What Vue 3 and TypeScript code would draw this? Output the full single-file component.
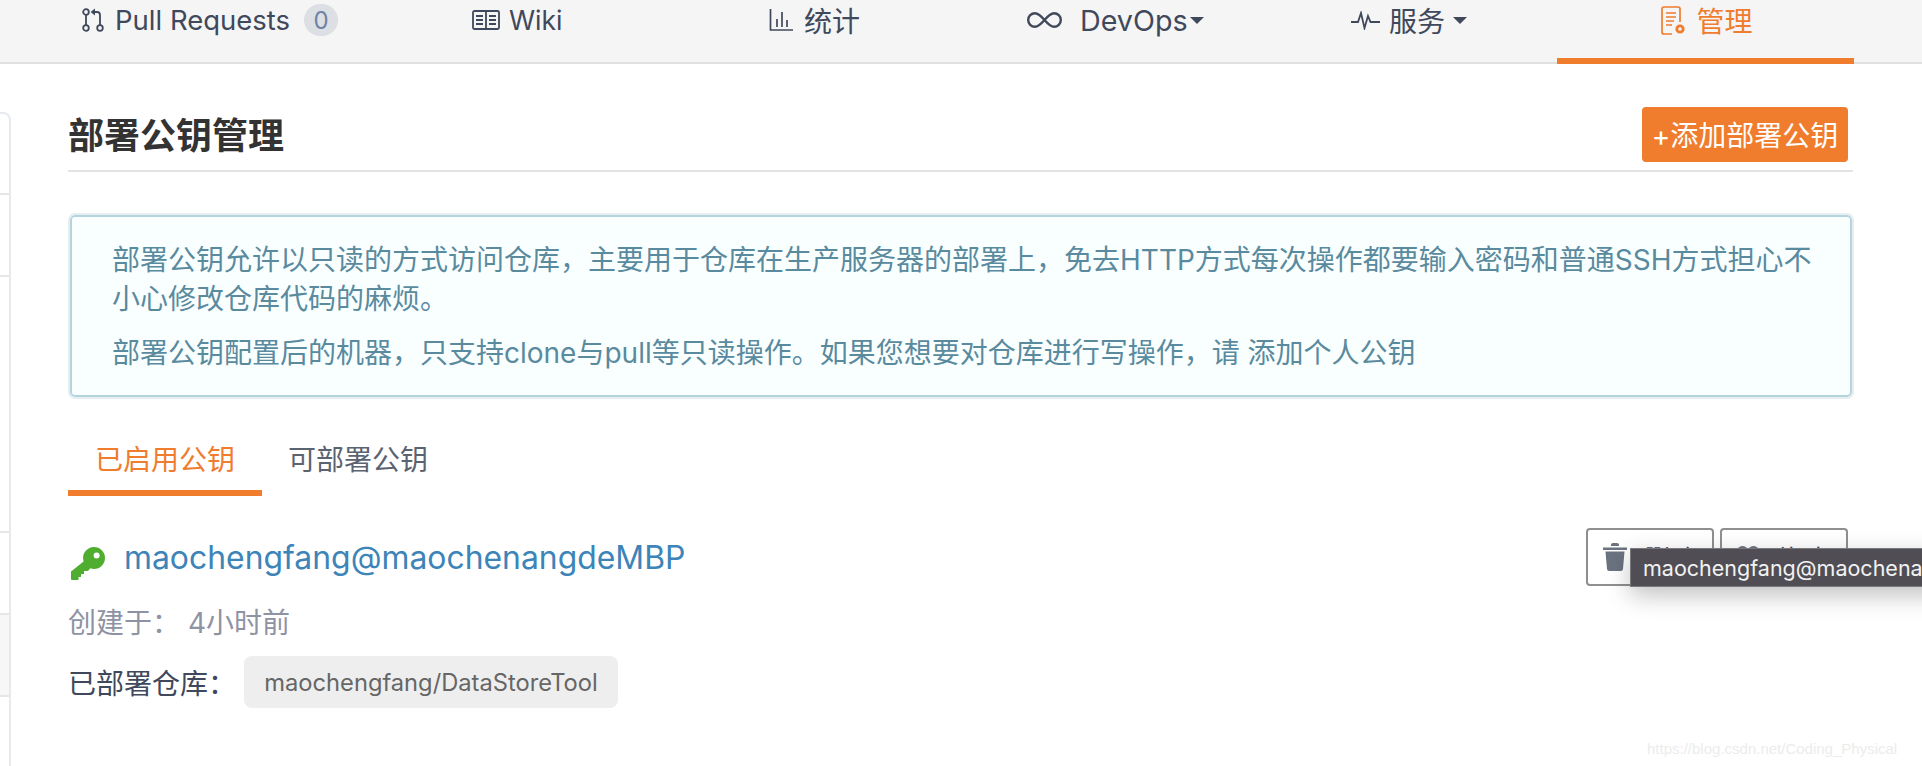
<script setup lang="ts">
interface NavItem { label: string; col: string; caret?: boolean; active?: boolean; count?: number; icon: string }
const navItems: NavItem[] = [
  { label: 'Pull Requests', col: 'c-pr', count: 0, icon: 'pr' },
  { label: 'Wiki', col: 'c-wiki', icon: 'wiki' },
  { label: '统计', col: 'c-stat', icon: 'stat' },
  { label: 'DevOps', col: 'c-devops', caret: true, icon: 'inf' },
  { label: '服务', col: 'c-serv', caret: true, icon: 'pulse' },
  { label: '管理', col: 'c-admin', active: true, icon: 'admin' },
]
const sideRows = [81, 82, 256, 82, 82, 82]
</script>

<template>
  <div class="page">
    <nav class="nav">
      <a v-for="item in navItems" :key="item.label" class="nav-item" :class="[item.col, { active: item.active }]">
        <svg v-if="item.icon === 'pr'" class="ico" width="22" height="24" viewBox="0 0 22 24" fill="none" stroke="currentColor" stroke-width="1.8">
          <circle cx="4" cy="4" r="2.800" /><circle cx="4" cy="20" r="2.800" /><circle cx="18" cy="20" r="2.800" />
          <path d="M4 7v10M18 17V7q0-3-3-3h-3" />
          <path d="M13 .5 8.500 4 13 7.500Z" fill="currentColor" stroke="none" />
        </svg>
        <svg v-else-if="item.icon === 'wiki'" class="ico" width="28" height="20" viewBox="0 0 28 20" fill="none" stroke="currentColor" stroke-width="1.800">
          <rect x="1" y="1" width="26" height="18" rx="1.500" />
          <path d="M14 1v18M4 6h7M4 10h7M4 14h7M17 6h7M17 10h7M17 14h7" />
        </svg>
        <svg v-else-if="item.icon === 'stat'" class="ico" width="24" height="22" viewBox="0 0 24 22" fill="none" stroke="currentColor" stroke-width="1.700">
          <path d="M1.500 0v21H24M8 10v8M13 3v15M18 11v7" />
        </svg>
        <svg v-else-if="item.icon === 'inf'" class="ico inf" width="35" height="16" viewBox="0 0 35 16" fill="none" stroke="currentColor" stroke-width="2.400">
          <path d="M17.500 8c-3.500-4-6-6.800-9.500-6.800a6.800 6.800 0 0 0 0 13.600c3.500 0 6-2.800 9.500-6.800s6-6.800 9.500-6.800a6.800 6.800 0 0 1 0 13.600c-3.500 0-6-2.800-9.500-6.800Z" />
        </svg>
        <svg v-else-if="item.icon === 'pulse'" class="ico" width="29" height="19" viewBox="0 0 29 19" fill="none" stroke="currentColor" stroke-width="1.800">
          <path d="M0 11h7l3-9 3.500 15L17 5l2.500 6H29" />
        </svg>
        <svg v-else class="ico" width="24" height="29" viewBox="0 0 24 29" fill="none" stroke="currentColor" stroke-width="1.700">
          <path d="M11 28H3Q1 28 1 26V3q0-2 2-2h14q2 0 2 2v13" />
          <path d="M5 7h10M5 11h10M5 15h8M5 19h6" />
          <circle cx="19" cy="23" r="3.200" stroke-width="2.800" />
        </svg>
        <span class="nav-label">{{ item.label }}</span>
        <span v-if="item.count !== undefined" class="count">{{ item.count }}</span>
        <i v-if="item.caret" class="caret"></i>
      </a>
    </nav>

    <div class="body">
      <aside class="side">
        <div v-for="(h, i) in sideRows" :key="i" class="side-row" :class="{ shaded: i === 4 }" :style="{ height: h + 'px' }"></div>
      </aside>

      <main class="main">
        <header class="head">
          <h2 class="title">部署公钥管理</h2>
          <button class="add">+添加部署公钥</button>
        </header>

        <section class="notice">
          <p>部署公钥允许以只读的方式访问仓库，主要用于仓库在生产服务器的部署上，免去HTTP方式每次操作都要输入密码和普通SSH方式担心不小心修改仓库代码的麻烦。</p>
          <p>部署公钥配置后的机器，只支持clone与pull等只读操作。如果您想要对仓库进行写操作，请 添加个人公钥</p>
        </section>

        <div class="tabs">
          <span class="tab on">已启用公钥</span>
          <span class="tab">可部署公钥</span>
        </div>

        <div class="key">
          <div class="key-top">
            <svg class="key-ico" width="34" height="33" viewBox="0 0 34 33">
              <path fill="#4fae30" fill-rule="evenodd" d="M23 0a11 11 0 0 1 0 22c-1.300 0-2.600-.2-3.700-.7L17 24h-4v3h-3v3H7.500v3H1q-1 0-1-1v-7.500L12.600 14.500A11 11 0 0 1 23 0Zm2.600 5.600a3 3 0 1 0 0 6 3 3 0 0 0 0-6Z" />
            </svg>
            <a class="key-name">maochengfang@maochenangdeMBP</a>
            <div class="actions">
              <button class="act">
                <svg width="26" height="30" viewBox="0 0 26 30"><path fill="#6b7280" d="M1 5.500h24V8H1ZM9 2.500Q9 1 11 1h4q2 0 2 1.500V4H9ZM3.500 9.500h19L21 27q-.2 2-2.200 2H7.200Q5.200 29 5 27Z" /></svg>
                <span class="act-label">删除</span>
              </button>
              <button class="act">
                <svg width="24" height="24" viewBox="0 0 24 24" fill="none" stroke="#6b7280" stroke-width="3"><circle cx="6.500" cy="7" r="4.500" /><circle cx="17.500" cy="7" r="4.500" /></svg>
                <span class="act-label">修改</span>
              </button>
            </div>
          </div>
          <div class="created"><span>创建于：</span><span class="ago">4小时前</span></div>
          <div class="repos"><span class="repo-label">已部署仓库：</span><span class="repo">maochengfang/DataStoreTool</span></div>
          <div class="tooltip">maochengfang@maochenangdeMBP</div>
        </div>
      </main>
    </div>
    <span class="mark">https://blog.csdn.net/Coding_Physical</span>
  </div>
</template>

<style>
html, body { margin: 0; overflow: hidden; background: #fff; }
</style>

<style scoped>
.page {
  position: relative;
  width: 1922px;
  height: 766px;
  overflow: hidden;
  font-family: Inter, "Noto Sans CJK SC", sans-serif;
  color: #40485b;
}
.nav {
  height: 62px;
  display: grid;
  grid-template-columns: 82px 390px 297px 258px 324px 206px 297px;
  align-items: start;
  background: #f5f5f5;
  border-bottom: 2px solid #e0e0e0;
}
.nav-item {
  display: flex;
  align-items: center;
  gap: 9px;
  height: 40px;
  font-size: 28px;
  white-space: nowrap;
}
.c-pr { grid-column: 1 / span 2; margin-left: 82px; font-size: 27.5px; gap: 11px; }
.c-wiki { grid-column: 3; font-size: 26.5px; }
.c-stat { grid-column: 4; gap: 11px; }
.c-devops { grid-column: 5; font-size: 28.7px; gap: 18px; }
.c-serv { grid-column: 6; }
.c-admin { grid-column: 7; gap: 11px; justify-content: center; padding-left: 3px; }
.nav-item.active {
  color: #f07c2e;
  height: 64px;
  padding-bottom: 18px;
  box-sizing: border-box;
  border-bottom: 6px solid #f07c2e;
}
.count {
  width: 34px;
  height: 32px;
  border-radius: 16px;
  background: #dcdfe3;
  color: #6f83a3;
  font-size: 24px;
  display: flex;
  align-items: center;
  justify-content: center;
  margin-left: 3px;
}
.caret {
  width: 0;
  height: 0;
  border: 7.5px solid transparent;
  border-top: 7px solid #40485b;
  border-bottom: 0;
}
.c-devops .caret { margin-left: -16px; }
.c-serv .caret { margin-left: -1px; }
.body { display: flex; }
.side {
  width: 9px;
  margin-top: 48px;
  height: 800px;
  border: 2px solid #e6eaef;
  border-left: 0;
  border-radius: 0 8px 0 0;
  flex: none;
}
.side-row { border-bottom: 2px solid #e6e6e6; box-sizing: border-box; }
.side-row.shaded { background: #f7f7f7; }
.main {
  width: 1785px;
  margin-left: 57px;
  flex: none;
  position: relative;
}
.head {
  height: 108px;
  box-sizing: border-box;
  padding: 43px 5px 9px 0;
  display: flex;
  align-items: center;
  justify-content: space-between;
  border-bottom: 2px solid #e3e3e3;
}
.title {
  margin: 4px 0 0;
  font-size: 36px;
  font-weight: 700;
  color: #333;
  line-height: 44px;
}
.add {
  width: 206px;
  height: 55px;
  padding: 0;
  background: #f07c2e;
  color: #fff;
  border: 0;
  border-radius: 4px;
  font: inherit;
  font-size: 28px;
  white-space: nowrap;
}
.notice {
  margin: 43px 0 0 2px;
  width: 1782px;
  height: 182px;
  box-sizing: border-box;
  border: 2px solid #b5d5de;
  outline: 2px solid #e6eef1;
  border-radius: 5px;
  background: #f9ffff;
  padding: 24px 34px 0 40px;
  color: #5a8a9e;
  font-size: 28px;
  line-height: 39px;
}
.notice p { margin: 0 0 15px; }
.tabs {
  display: flex;
  margin-top: 35px;
  height: 64px;
}
.tab {
  width: 194px;
  box-sizing: border-box;
  text-align: center;
  font-size: 28px;
  line-height: 56px;
  color: #5b6270;
}
.tab.on {
  color: #f07c2e;
  border-bottom: 6px solid #f07c2e;
}
.tab:not(.on) { margin-left: -1px; }
.key { position: relative; margin-top: 36px; }
.key-top { display: flex; align-items: center; height: 50px; }
.key-ico { margin-left: 3px; margin-top: 13px; flex: none; }
.key-name {
  margin-left: 19px;
  font-size: 31.9px;
  color: #3d84b8;
}
.actions {
  margin-left: auto;
  margin-right: 5px;
  display: flex;
  gap: 6px;
}
.act {
  width: 128px;
  height: 58px;
  border: 2px solid #8f8f8f;
  border-radius: 4px;
  background: #fff;
  padding: 0 0 0 14px;
  box-sizing: border-box;
  display: flex;
  align-items: center;
  gap: 16px;
  font: inherit;
  font-size: 26px;
  color: #40485b;
}
.act-label { white-space: nowrap; }
.created {
  margin-top: 23px;
  font-size: 28px;
  line-height: 36px;
  color: #8e93a3;
}
.ago { margin-left: 8px; }
.repos {
  margin-top: 15px;
  display: flex;
  align-items: center;
  font-size: 28px;
}
.repo-label { width: 176px; color: #40485b; white-space: nowrap; }
.repo {
  height: 52px;
  width: 374px;
  display: flex;
  align-items: center;
  justify-content: center;
  box-sizing: border-box;
  background: #eee;
  border-radius: 8px;
  color: #666;
  font-size: 23.7px;
}
.tooltip {
  position: absolute;
  left: 1562px;
  top: 16px;
  height: 37px;
  padding: 0 12px;
  display: flex;
  align-items: center;
  white-space: nowrap;
  background: #504e54;
  border: 1px solid #7a797d;
  color: #f2f2f2;
  font-size: 21.5px;
  box-shadow: 0 8px 24px rgba(0, 0, 0, .25);
}
.mark {
  position: absolute;
  left: 1647px;
  top: 740px;
  font-family: "Liberation Sans", sans-serif;
  font-size: 15px;
  color: #ececec;
}
</style>
